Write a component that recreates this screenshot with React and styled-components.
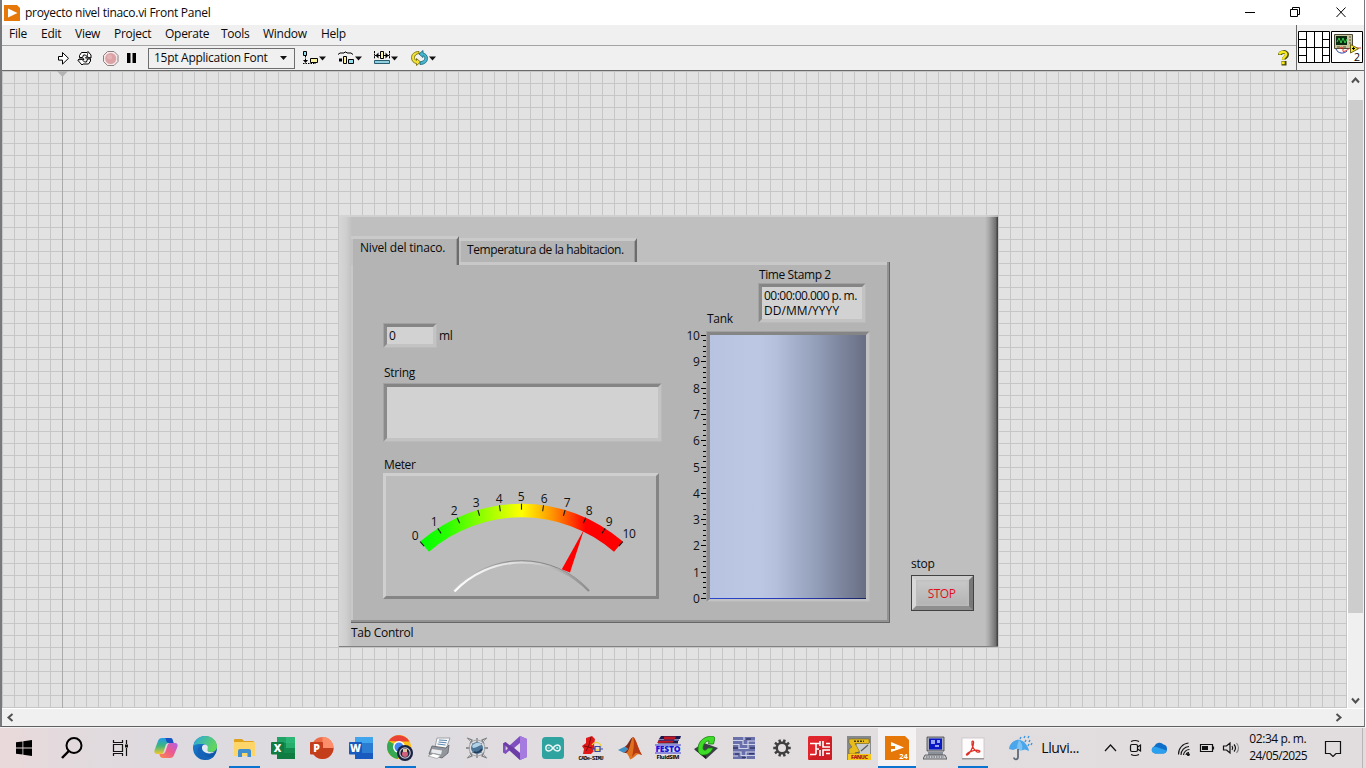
import React from "react";
import styled, { createGlobalStyle } from "styled-components";

const Global = createGlobalStyle`
  * { box-sizing: border-box; }
  html, body { margin: 0; padding: 0; overflow: hidden; }
  body { font-family: "Open Sans", "Noto Sans", sans-serif; font-size: 12px; color: #000; }
  svg { display: block; flex: none; }
`;

const T = styled.span`
  display: block;
  white-space: pre;
  line-height: 16px;
  letter-spacing: ${(p) => p.$ls ?? -0.27}px;
  font-size: ${(p) => p.$size ?? 12}px;
  color: ${(p) => p.$color ?? "#0a0a0a"};
`;

const Screen = styled.div`
  width: 1366px;
  height: 768px;
  display: flex;
  flex-direction: column;
  background: #fff;
`;
const Window = styled.div`
  height: 727px;
  width: 1365px;
  display: flex;
  flex-direction: column;
  border-left: 2px solid #77797d;
  border-right: 1px solid #77797d;
  border-bottom: 1px solid #606060;
`;
const TitleBar = styled.div`
  height: 25px;
  flex: none;
  display: flex;
  align-items: center;
  padding-left: 2px;
  background: #fff;
`;
const TitleText = styled(T)`
  margin-left: 5px;
  padding-top: 1px;
  flex: 1;
`;
const Header = styled.div`
  height: 46px;
  flex: none;
  display: flex;
  background: #f0f0f0;
  border-bottom: 1px solid #6a6a6a;
`;
const Bars = styled.div`
  flex: 1;
  display: flex;
  flex-direction: column;
`;
const MenuBar = styled.div`
  height: 21px;
  display: flex;
  padding-left: 7px;
  padding-top: 1px;
  border-bottom: 1px solid #a3a3a3;
`;
const MenuItem = styled(T)`
  width: ${(p) => p.$w}px;
  flex: none;
`;
const ToolBar = styled.div`
  flex: 1;
  display: flex;
  align-items: center;
`;
const FontBox = styled.div`
  width: 147px;
  height: 21px;
  flex: none;
  margin: 0 7px 0 11px;
  padding: 0 7px 0 5px;
  border: 1px solid #6e6e6e;
  display: flex;
  align-items: center;
  justify-content: space-between;
`;
const Spacer = styled.div`
  flex: ${(p) => (p.$w ? "none" : 1)};
  width: ${(p) => p.$w ?? 0}px;
`;
const PaneIcons = styled.div`
  width: 68px;
  display: flex;
  padding: 6px 0 0 1px;
  border-left: 1px solid #6a6a6a;
`;
const Work = styled.div`
  flex: 1;
  min-height: 0;
  display: flex;
`;
const Canvas = styled.div`
  flex: 1;
  position: relative;
  background-color: #e2e2e2;
  background-image: linear-gradient(90deg, #c6c6c6 1px, transparent 1px),
    linear-gradient(#c6c6c6 1px, transparent 1px);
  background-size: 12px 12px;
`;
const Origin = styled.div`
  position: absolute;
  left: 60px;
  top: 0;
  bottom: 0;
  width: 1px;
  background: #aaa;
`;
const OriginMark = styled.svg`
  position: absolute;
  left: 55px;
  top: 0;
`;
const VScroll = styled.div`
  width: 17px;
  padding: 5px 2px 3px 0;
  background: #f0f0f0;
  border-left: 1px solid #fff;
  display: flex;
  flex-direction: column;
  align-items: center;
`;
const VTrack = styled.div`
  flex: 1;
  width: 15px;
  margin-right: -1px;
  padding-top: 15px;
`;
const Thumb = styled.div`
  height: 513px;
  background: #cdcdcd;
`;
const HScroll = styled.div`
  height: 18px;
  flex: none;
  background: #f0f0f0;
  border-top: 1px solid #fff;
  display: flex;
  align-items: center;
  justify-content: space-between;
  padding: 0 21px 0 4px;
`;

/* front panel */
const Panel = styled.div`
  position: absolute;
  left: 337px;
  top: 144px;
  width: 659px;
  height: 432px;
  padding: 21px 12px 0 12px;
  display: flex;
  background: linear-gradient(90deg, #d6d6d6 0, #cfcfcf 7px, #bfbfbf 13px, #bfbfbf 646px, #a8a8a8 650px, #6e6e6e 657px, #454545 658px);
  border-bottom: 1px solid #808080;
  box-shadow: inset 0 2px 0 rgba(214, 214, 214, 0.75);
`;
const TabControl = styled.div`
  width: 539px;
  flex: none;
`;
const TabStrip = styled.div`
  height: 26px;
  display: flex;
  align-items: flex-end;
`;
const Tab = styled.div`
  position: relative;
  z-index: ${(p) => (p.$active ? 2 : 1)};
  width: ${(p) => p.$w}px;
  height: ${(p) => p.$h}px;
  margin-bottom: ${(p) => (p.$active ? -3 : 0)}px;
  padding: 1px 0 0 ${(p) => (p.$active ? 9 : 8)}px;
  background: #b4b4b4;
  border-top: 3px solid #cacaca;
  border-right: 2px solid #6c6c6c;
  box-shadow: inset -1px 0 0 #999, inset 2px 0 0 #c2c2c2;
`;
const Page = styled.div`
  height: 361px;
  display: flex;
  background: #b4b4b4;
  box-shadow: inset -1px -1px 0 #666, inset -3px -3px 0 #929292, inset 2px 3px 0 #c8c8c8;
`;
const LeftCol = styled.div`
  width: 302px;
  flex: none;
  padding: 61px 0 0 32px;
`;
const RightCol = styled.div`
  padding-top: 5px;
  margin-left: 32px;
`;
const Row = styled.div`
  display: flex;
  align-items: ${(p) => p.$align ?? "center"};
`;
const Sunken = styled.div`
  width: ${(p) => p.$w}px;
  height: ${(p) => p.$h}px;
  border: 4px solid;
  border-color: #858585 #c3c3c3 #c3c3c3 #8a8a8a;
  outline: 1px solid rgba(180, 180, 180, 0.6);
  outline-offset: -1px;
  background: #d2d2d2;
  padding: 1px 0 0 2px;
`;
const TankBody = styled(Sunken)`
  padding: 0;
  border-bottom-width: 3px;
  background: linear-gradient(90deg, #b8c3e1 0, #bcc8e3 50px, #b4c0dc 66px, #949fba 105px, #7a829a 135px, #686f84 156px);
  display: flex;
  align-items: flex-end;
`;
const Fluid = styled.div`
  height: 1px;
  width: 100%;
  background: linear-gradient(90deg, #2a45cf, #2436b0 60%, #1a2466);
`;
const Caption = styled(T)`
  margin: ${(p) => p.$m};
  width: ${(p) => (p.$w ? p.$w + "px" : "auto")};
`;
const StampBlock = styled.div`
  margin-bottom: 4px;
`;
const TankCaption = styled(Caption)`
  width: 51px;
  margin: 0 0 0 22px;
`;
const MeterBox = styled.div`
  width: 276px;
  height: 126px;
  border: 3px solid;
  border-color: #cfcfcf #858585 #858585 #cfcfcf;
  background: #bcbcbc;
`;
const StopCol = styled.div`
  margin: 320px 0 0 21px;
`;
const StopButton = styled.div`
  width: 63px;
  height: 36px;
  margin-top: 3px;
  border: 1px solid #424242;
  display: flex;
`;
const StopFace = styled.div`
  flex: 1;
  border: 4px solid;
  border-color: #cdcdcd #787878 #8e8e8e #d8d8d8;
  box-shadow: inset 0 0 3px 1px #bdbdbd;
  background: linear-gradient(#cacaca, #b2b2b2);
  display: flex;
  align-items: center;
  justify-content: center;
  padding: 2px 2px 0 0;
`;

/* taskbar */
const TaskBar = styled.div`
  height: 41px;
  display: flex;
  align-items: stretch;
  border-top: 1px solid #f4f1f2;
  background: linear-gradient(90deg, #ead9da 0, #e2dadd 70px, #dddae0 200px, #dedbe0 420px, #e2dddf 620px, #e1dcde 100%);
`;
const SysButton = styled.div`
  width: 48px;
  display: flex;
  align-items: center;
  justify-content: center;
`;
const TaskButton = styled.div`
  width: ${(p) => p.$w ?? 38.2}px;
  flex: none;
  display: flex;
  align-items: center;
  justify-content: center;
  position: relative;
  background: ${(p) => (p.$active ? "#f4f2f3" : "transparent")};
  &::after {
    content: "";
    display: ${(p) => (p.$line ? "block" : "none")};
    position: absolute;
    bottom: 0;
    left: ${(p) => (p.$active ? 0 : 4)}px;
    right: ${(p) => (p.$active ? 0 : 4)}px;
    height: 2px;
    background: #0a74d0;
  }
`;
const Weather = styled.div`
  display: flex;
  align-items: center;
  margin-left: 16px;
  width: 96px;
  gap: 7px;
`;
const Tray = styled.div`
  flex: 1;
  display: flex;
  align-items: center;
`;
const Clock = styled.div`
  width: 60px;
  margin-left: 5px;
  padding-bottom: 2px;
`;
const ClockLine = styled(T)`
  line-height: 17px;
`;
const DesktopEdge = styled.div`
  align-self: stretch;
  width: 1px;
  margin: 0 3px 0 20px;
  background: #b9b4b6;
`;

/* icon drawn on a grid whose unit is one screen pixel */
const Px = ({ b, children, ...rest }) => {
  const [, , w, h] = b;
  return (
    <svg width={w} height={h} viewBox={b.join(" ")} {...rest}>
      {children}
    </svg>
  );
};
const Caret = ({ x, y }) => <path d={`M${x} ${y}h7l-3.5 4z`} fill="#111" />;

const Arrow = ({ d }) => (
  <svg width="9" height="9" viewBox="0 0 9 9">
    <path d={d} fill="none" stroke="#505050" strokeWidth="2" />
  </svg>
);

const ToolIcons = {
  run: (
    <Px b={[56, 48, 16, 20]}>
      <path d="M58.500 56.500h4v-4l6 5.800-6 5.800v-4h-4z" fill="#fff" stroke="#000" />
    </Px>
  ),
  loop: (
    <Px b={[76, 48, 18, 20]}>
      <path d="M79.500 57.500v-2l2-3h5.500l1-1 3 3.500v3h-5.500l1.500-1.500-1.500-1.500h-2l-1 2.500z" fill="#fff" stroke="#000" />
      <path d="M90.500 59v2l-2 3h-5.500l-1 1-4-4.500 1-1.500h5l-1 1.500 1.500 1.500h2l1-3z" fill="#fff" stroke="#000" />
      <path d="M88 52l-1 5 4 1M78 60l6-1" stroke="#000" fill="none" strokeWidth=".8" />
    </Px>
  ),
  abort: (
    <Px b={[102, 49, 18, 18]}>
      <path d="M107.500 51.500h6.500l4 4v6l-4 4h-6.500l-4-4v-6z" fill="#f4e8e8" stroke="#8b7f7f" />
      <circle cx="110.700" cy="58.500" r="5.500" fill="#dba3a6" />
      <circle cx="109.500" cy="57" r="2.500" fill="#e4b3b5" />
    </Px>
  ),
  pause: (
    <Px b={[126, 52, 11, 12]}>
      <path d="M127 53h3.500v10H127zM132.500 53h3.500v10h-3.500z" fill="#000" />
    </Px>
  ),
  align: (
    <Px b={[302, 49, 25, 18]}>
      <path d="M303.500 51.500h3v4h-3z" fill="#8fe0ee" stroke="#000" />
      <path d="M305.500 56v4" stroke="#000" strokeDasharray="1.500 1" />
      <path d="M303 60h5l-2.500 3z" fill="#000" />
      <path d="M303 63.500h13" stroke="#000" strokeDasharray="1.500 1" />
      <path d="M310.500 58.500h7v4h-7z" fill="#fbf3a0" stroke="#000" />
      <Caret x={319} y={56.500} />
    </Px>
  ),
  distribute: (
    <Px b={[337, 49, 26, 18]}>
      <path d="M338 54.500l2-1.500h4l1-1h1l1 1h4l2 1.500" fill="none" stroke="#000" />
      <path d="M339 58.500h3v3h-3z" fill="#000" />
      <path d="M343.500 56.500h3v7h-3z" fill="#fbf3a0" stroke="#000" />
      <path d="M348.500 59.500h5v4h-5z" fill="#8fe0ee" stroke="#000" />
      <Caret x={355} y={56.500} />
    </Px>
  ),
  resize: (
    <Px b={[373, 49, 26, 18]}>
      <path d="M374.500 51v8M389.500 51v8" stroke="#000" strokeDasharray="2 .6" />
      <path d="M375 55.500h5M384 55.500h5" stroke="#000" />
      <path d="M375.500 55.500l3-3v6zM388.500 55.500l-3-3v6z" fill="#000" />
      <path d="M380.500 51.500h3v7h-3z" fill="#fbf3a0" stroke="#000" />
      <path d="M374.500 60.500h15v3h-15z" fill="#8fcfe0" stroke="#2b5d70" />
      <Caret x={391} y={56.500} />
    </Px>
  ),
  reorder: (
    <Px b={[410, 49, 27, 18]}>
      <path d="M419 51.500c-5 0-7.500 3-7.500 6 0 3.500 2 5.500 5 6v2l4-3.500-4-3.500v2c-1.500-.5-2-1.500-2-3 0-2 1.500-3.500 4.500-4z" fill="#f2e13a" stroke="#857a12" />
      <path d="M420 64.500c5 0 7.500-3 7.500-6 0-3-2-5-4.500-5.500v-2.500l-4 3.500 4 3.500v-1.800c1.500.3 1.800 1.300 1.800 2.500 0 1.800-1.800 3.300-4.800 3.800z" fill="#46b6cf" stroke="#1f6b80" strokeWidth=".9" />
      <Caret x={429} y={56.500} />
    </Px>
  ),
};

const HelpMark = () => (
  <Px b={[1276, 48, 16, 20]}>
    <path d="M1280 55c0-3.500 7-4 7-.5 0 2.700-3.200 2.500-3.200 5" fill="none" stroke="#4a4708" strokeWidth="4" />
    <path d="M1281.500 61h5v4.500h-5z" fill="#4a4708" />
    <path d="M1279.700 54.500c0-3.200 6.600-3.500 6.600-.3 0 2.700-3.200 2.500-3.200 5.300" fill="none" stroke="#f4ea1c" strokeWidth="2.400" />
    <path d="M1281.700 61.500h3v2.700h-3z" fill="#f4ea1c" />
  </Px>
);

const PaneGrid = () => (
  <Px b={[1298, 31, 33, 33]}>
    <path
      d="M1298.500 31.500h31v31h-31zM1306.500 31.500v31M1314.500 31.500v31M1322.500 31.500v31M1298.500 39.500h8M1298.500 47.500h31M1298.500 55.500h8M1322.500 39.500h7M1322.500 55.500h7"
      fill="#fff"
      stroke="#000"
    />
  </Px>
);
const ViIcon = () => (
  <Px b={[1331, 31, 33, 33]}>
    <path d="M1331.500 31.500h31v31h-31z" fill="#fff" stroke="#000" />
    <path d="M1334.500 34.500h18v14h-18z" fill="#c9c49c" stroke="#4a4838" />
    <path d="M1336 36h11v9h-11z" fill="#0b2a12" />
    <path d="M1337 42l2-4 2 5 2-5 2 5 2-4" fill="none" stroke="#35d04a" />
    <path d="M1349 37h2M1349 40h2M1349 43h2M1337 47h3M1343 47h3" stroke="#55503c" />
    <path d="M1336 49c2 5 8 5 11 2" fill="none" stroke="#2638a0" />
    <path d="M1340 49c0-3 4-2 3 1s3 1 7-2h11" fill="none" stroke="#d8342a" />
    <path d="M1350.500 44.500v8.500l8-4.300z" fill="#f7e83b" stroke="#6d6412" />
    <path d="M1352 48.500h3M1353.500 47v3" stroke="#000" />
    <text x="1354" y="61" fontSize="10.500" fontFamily="Open Sans">2</text>
  </Px>
);

/* meter geometry */
const CX = 521.5, CY = 658.2, RO = 154.5, RI = 141;
const pt = (r, deg) => {
  const a = (deg * Math.PI) / 180;
  return [CX + r * Math.sin(a), CY - r * Math.cos(a)].map((v) => v.toFixed(2));
};
const METER_LABELS = [[415, 535], [434, 521], [454, 510], [476, 502], [499, 498], [521, 496], [544, 498], [567, 502], [589, 510], [609, 521], [629, 533]];
const Meter = () => (
  <Px b={[386, 476, 270, 120]}>
    <defs>
      <linearGradient id="mg" gradientUnits="userSpaceOnUse" x1="421" y1="0" x2="622" y2="0">
        <stop offset="0" stopColor="#00ff00" />
        <stop offset=".12" stopColor="#24ff00" />
        <stop offset=".5" stopColor="#ffff00" />
        <stop offset=".66" stopColor="#ff9000" />
        <stop offset=".82" stopColor="#ff0000" />
      </linearGradient>
      <linearGradient id="rim" gradientUnits="userSpaceOnUse" x1="454" y1="0" x2="589" y2="0">
        <stop offset="0" stopColor="#fff" />
        <stop offset=".4" stopColor="#e4e4e4" />
        <stop offset=".6" stopColor="#cfcfcf" />
        <stop offset="1" stopColor="#8a8a8a" />
      </linearGradient>
      <linearGradient id="rim2" gradientUnits="userSpaceOnUse" x1="454" y1="0" x2="589" y2="0">
        <stop offset="0" stopColor="#d0d0d0" />
        <stop offset=".4" stopColor="#8c8c8c" />
        <stop offset=".75" stopColor="#858585" />
        <stop offset="1" stopColor="#9a9a9a" />
      </linearGradient>
    </defs>
    <path
      d={`M${pt(RO, -41)}A${RO} ${RO} 0 0 1 ${pt(RO, 41)}L${pt(RI, 41)}A${RI} ${RI} 0 0 0 ${pt(RI, -41)}Z`}
      fill="url(#mg)"
    />
    {METER_LABELS.map(([x, y], i) => {
      const a = -41 + i * 8.2;
      return (
        <g key={i}>
          <path d={`M${pt(RO, a)}L${pt(RO - 6, a)}`} stroke="#1a1a1a" strokeWidth="1.100" />
          <text x={x} y={y + 4.500} fontSize="12" textAnchor="middle" letterSpacing="-.3" fill="#111">{i}</text>
        </g>
      );
    })}
    <path d="M454.500 591.500A93 93 0 0 1 589 591" fill="none" stroke="url(#rim)" strokeWidth="2.200" />
    <path d="M453.500 590.200A93 93 0 0 1 589.500 590.200" fill="none" stroke="url(#rim2)" strokeWidth="1" />
    <path d="M584 529.500L570 572.500L561.800 569.200Z" fill="#f00" />
  </Px>
);

const TankScale = () => (
  <svg width="21" height="271" viewBox="685 331 21 271" overflow="visible">
    {Array.from({ length: 51 }, (_, i) => {
      const y = Math.round(335 + i * 5.26) + 0.5;
      const major = i % 5 === 0;
      return (
        <g key={i}>
          <path d={`M${major ? 701 : 703} ${y}H706`} stroke="#000" />
          {major && (
            <text x="699.500" y={y + 4} fontSize="12" textAnchor="end" letterSpacing="-.3" fill="#111">{10 - i / 5}</text>
          )}
        </g>
      );
    })}
  </svg>
);

/* taskbar icons, 24 x 24 */
const I = ({ children, s = 24 }) => (
  <svg width={s} height={s} viewBox="0 0 24 24">{children}</svg>
);
const Office = ({ l, c, m, d, round }) => (
  <I>
    {round ? (
      <>
        <circle cx="12.500" cy="12" r="11" fill={m} />
        <path d="M12.500 1a11 11 0 0 1 11 11h-11z" fill={c} />
        <path d="M1.500 12h22a11 11 0 0 1-22 0z" fill={d} />
      </>
    ) : (
      <>
        <rect x="6" y="1" width="18" height="22" rx="1" fill={m} />
        <rect x="6" y="1" width="18" height="6" fill={c} />
        <rect x="6" y="17" width="18" height="6" fill={d} />
        {l === "X" && <path d="M15 1h9v11h-9z" fill="#33c481" opacity=".6" />}
      </>
    )}
    <rect x="0" y="6" width="13" height="12.500" rx="1" fill={d} />
    <text x="6.500" y="16" textAnchor="middle" fontSize="10.500" fontWeight="800" fill="#fff">{l}</text>
  </I>
);

const Icons = {
  copilot: (
    <I>
      <defs>
        <linearGradient id="cpa" x1="0" y1="0" x2="0" y2="1"><stop offset="0" stopColor="#1f9be8" /><stop offset=".5" stopColor="#3fb67c" /><stop offset="1" stopColor="#f3c72f" /></linearGradient>
        <linearGradient id="cpb" x1="1" y1="0" x2="0" y2="1"><stop offset="0" stopColor="#b160e8" /><stop offset=".5" stopColor="#ef5a8c" /><stop offset="1" stopColor="#f98a4a" /></linearGradient>
      </defs>
      <path d="M8 2h8c2 0 2.500 1 3 3l.6 2H15c-2 0-3 1-3.600 3l-1.800 6c-.6 1.500-1.500 2-3 2H3c-2.500 0-3-2-2.400-4L4 5c.6-2 2-3 4-3z" fill="url(#cpa)" />
      <path d="M11 2h5c2 0 2.500 1 3 3l.6 2H15c-2 0-2.500-1-3-3-.2-1-.4-2-1-2z" fill="#1b4fc4" />
      <path d="M16 22H9c-2 0-2.800-1-3.200-2.500L5.400 18H8c2 0 3-1 3.600-3l2-6c.6-1.500 1.500-2 3-2H21c2.500 0 3 2 2.400 4L20 19c-.6 2-2 3-4 3z" fill="url(#cpb)" />
    </I>
  ),
  edge: (
    <I>
      <defs>
        <linearGradient id="ea" x1="0" y1="0" x2="1" y2=".4"><stop offset="0" stopColor="#2aa7e0" /><stop offset="1" stopColor="#62d65c" /></linearGradient>
        <linearGradient id="eb" x1="0" y1="0" x2="1" y2="1"><stop offset="0" stopColor="#1c87d8" /><stop offset="1" stopColor="#0c4a9c" /></linearGradient>
      </defs>
      <circle cx="12" cy="12" r="12" fill="url(#eb)" />
      <path d="M.5 10C1.500 4 6.500 0 12 0c7 0 12 5 12 10.500 0 4-3 5.500-6 5.500-3 0-4-1.500-3.500-2.500 1.500-3-1-5.500-4-5.500C6 8 2 8 .5 10z" fill="url(#ea)" />
      <path d="M9.500 11.500c-1.500 4 1 8.500 6 9.500 2 .3 4-.3 6-1.500-1 2-3.500 3.500-6 4C9 24 4 20 4.500 15c.2-3 2.500-6 5.500-6z" fill="#1563b8" />
      <path d="M14.700 13c1-3-1-4.500-3-4.500-3 0-3.500 4-1.500 6.500 2.500 2.800 8 3.500 12 .5-2 1-5 .8-6.500.3-1-.5-1.400-1.400-1-2.800z" fill="#e4e8f2" />
    </I>
  ),
  folder: (
    <I>
      <path d="M2 4q0-1 1-1h7l2 2h9q1 0 1 1v14H2z" fill="#e0a21a" />
      <path d="M2 6h20q1 0 1 1v13H2z" fill="#fdd568" />
      <path d="M6 20v-5q0-2 2-2h9q2 0 2 2v6h-3.500v-4h-5.500v4H6z" fill="#3f8ed0" />
    </I>
  ),
  excel: <Office l="X" c="#21a366" m="#158a4f" d="#107c41" />,
  ppt: <Office l="P" c="#ff8f6b" m="#ed6c47" d="#c43e1c" round />,
  word: <Office l="W" c="#41a5ee" m="#2b7cd3" d="#185abd" />,
  chrome: (
    <svg width="26" height="26" viewBox="0 0 26 26">
      <circle cx="12" cy="12" r="12" fill="#fbc116" />
      <path d="M12 12L1.600 6a12 12 0 0 0 9 17.900l4-8z" fill="#34a853" />
      <path d="M1.600 6A12 12 0 0 1 22.400 6.500H12z" fill="#ea4335" />
      <circle cx="12" cy="12" r="6" fill="#fff" />
      <circle cx="12" cy="12" r="4.500" fill="#4285f4" />
      <circle cx="18" cy="18" r="8" fill="#18213f" />
      <circle cx="18" cy="18" r="5.200" fill="none" stroke="#c9c3cf" strokeWidth="1.200" />
      <circle cx="18" cy="19" r="3" fill="#d0607c" />
      <path d="M16 14h4v3h-4z" fill="#e6c9a0" />
    </svg>
  ),
  printer: (
    <I>
      <path d="M10 2l13 0-4 11-11-2z" fill="#fafafa" stroke="#8a8f94" strokeWidth=".8" />
      <path d="M12 4l8 .5M11.500 6l8 .8M10.500 8l8 1" stroke="#5c88b0" />
      <path d="M5 10l14 2 3-3-1 8-6 5-13-4z" fill="#92969c" stroke="#5b6066" strokeWidth=".8" />
      <path d="M5 13l10 1.500-1 4-10-2z" fill="#e9ebee" />
      <path d="M1 20l9 2.500 4-3-8-2z" fill="#fff" stroke="#888" strokeWidth=".6" />
    </I>
  ),
  atom: (
    <I>
      <path d="M2 2l5 2-2 4M22 2l-5 2 2 4M2 22l5-2-2-4M22 22l-5-2 2-4M12 2v4M12 18v4M1 12h4M19 12h4" stroke="#77797c" strokeWidth="1.300" fill="none" />
      <path d="M2 2l20 20M22 2L2 22" stroke="#9a9da0" strokeWidth="1" />
      <circle cx="12" cy="12" r="8" fill="none" stroke="#a4a7aa" />
      <circle cx="12" cy="12" r="6" fill="#4a7598" />
      <path d="M7 10c3-4 8-4 10-1-3 0-5 3-9 3z" fill="#b4d2e6" />
      <path d="M9 16c3 1 6 0 8-3" stroke="#223c54" strokeWidth="1.500" fill="none" />
    </I>
  ),
  vs: (
    <I>
      <path d="M17 0l7 3v18l-7 3L6.500 14.500 2.500 18 0 16.500v-9L2.500 6l4 3.500z" fill="#7f4fc0" />
      <path d="M17 0l7 3v18l-7 3z" fill="#a67be0" />
      <path d="M17 7v10l-6-5zM2.700 9.500v5L5.200 12z" fill="#e3dde6" />
      <path d="M0 7.500L2.500 6 11 12l6 5v7L6.500 14.500z" fill="#5c2d91" opacity=".55" />
    </I>
  ),
  arduino: (
    <I>
      <rect x="1" y="1" width="22" height="22" rx="3.500" fill="#2fa3a0" />
      <path d="M12 12c-1.500-2-2.500-3-4.200-3a3 3 0 0 0 0 6c1.700 0 2.700-1 4.200-3s2.500-3 4.200-3a3 3 0 0 1 0 6c-1.700 0-2.700-1-4.200-3z" fill="none" stroke="#e9f6f5" strokeWidth="1.400" />
      <path d="M6.700 12h2M15.200 12h2M16.200 11v2" stroke="#e9f6f5" strokeWidth=".8" />
    </I>
  ),
  cade: (
    <svg width="26" height="25" viewBox="-1 0 26 25">
      <path d="M7 2l6-2 3 3-1 6 1 5-4 4-8 0 1-5-2-3 4-3z" fill="#e01818" />
      <path d="M12 1l-2 8-3 6M5 10l8 2" stroke="#7a0c0c" fill="none" />
      <path d="M13 9c3-5 10-2 9 3M14 14h8" fill="none" stroke="#ecd23a" strokeWidth="1.300" />
      <path d="M16 10.500h5v5h-5zM13 13h3M21 13h3" fill="none" stroke="#3946a8" strokeWidth="1.200" />
      <text x="12" y="23.500" textAnchor="middle" fontSize="5.500" fontWeight="700" textLength="25" fontFamily="Liberation Mono">CADe-SIMU</text>
    </svg>
  ),
  matlab: (
    <I>
      <path d="M0 14l7-3.500 3 2.500-4 4z" fill="#3f8fc4" />
      <path d="M7 10.500C10 9.500 12 2 15 1c-2 7-3.500 14-6 16l-3 0 4-4z" fill="#7d2a1c" />
      <path d="M15 1c3 1 5 12 9 18-3-1.500-5-1-6.500 1-2 2-4 3-5.500 3.500C11 20 9.500 17.500 8 17c4-2 4-12 7-16z" fill="#e0701e" />
      <path d="M15 1c1.500 3 1 12-1 20 2-2 3-4 4-4 2-.5 4 1 6 2-4-6-6-17-9-18z" fill="#b63a14" />
    </I>
  ),
  festo: (
    <svg width="28" height="26" viewBox="-1 0 28 26">
      <path d="M6 1h20l-1 3H4zM3 6h20v2.500H3z" fill="#1a1a50" />
      <path d="M9 1.500h12l-3 6-16 .5 2-3h5z" fill="#c01822" />
      <path d="M4 4.500h20v1.300H3z" fill="#24307a" />
      <text x="13" y="17" textAnchor="middle" fontSize="8.500" fontWeight="800" fill="#1414d8" textLength="25">FESTO</text>
      <path d="M0 10h26M0 18h26" stroke="#1414d8" strokeWidth=".8" />
      <text x="13" y="23.500" textAnchor="middle" fontSize="6" fontWeight="700" textLength="23">FluidSIM</text>
    </svg>
  ),
  camtasia: (
    <I>
      <path d="M0 13l10-6 14 5-12 11z" fill="#3c4046" />
      <path d="M0 13l12 7v3z" fill="#1e2024" />
      <path d="M4 13C4 6 9 .5 18 0c2 0 3 1 2.500 4l-1 4h-5l.5-3c-4 0-6 4-6 7s3 3 5 0h5c-2 5-6 7-9.500 7C6 19 4 17 4 13z" fill="#3ddc26" stroke="#1a7d10" strokeWidth=".8" />
    </I>
  ),
  circuit: (
    <I>
      <rect x="1" y="1" width="22" height="22" fill="#6a70aa" />
      <path d="M1 4.500h10v4h12M1 8.500h6v4h9V5h7M1 16h8v3.500h14M1 20h5M12 1v3M14 23v-7h9" fill="none" stroke="#d0d2ea" strokeWidth="1.200" />
      <path d="M1 12h5M18 12h5M10 21.500h4M14 3h5M3 18h4M17 17.800h5" stroke="#34386c" strokeWidth="1.500" />
    </I>
  ),
  gear: (
    <I s={20}>
      <circle cx="12" cy="12" r="6.300" fill="none" stroke="#3f3f3f" strokeWidth="3" />
      {Array.from({ length: 10 }, (_, i) => (
        <rect key={i} x="10.500" y="1.500" width="3" height="4" fill="#3f3f3f" transform={`rotate(${i * 36 + 18} 12 12)`} />
      ))}
    </I>
  ),
  redTool: (
    <I>
      <rect x="0" y="0" width="24" height="24" rx="1.500" fill="#e0252c" />
      <path d="M24 0v24H0z" fill="#b9141c" opacity=".45" />
      <path d="M2 7.500h10M8 7.500v11M2 18.500h6M8 13h3M12 5v5M12 14v6M15 5v6h7M15 20v-6h7M18 7.500h4M18 17.500h4" fill="none" stroke="#fff" strokeWidth="1.600" />
    </I>
  ),
  fanuc: (
    <I>
      <rect x="0" y="0" width="24" height="24" fill="#85898b" />
      <path d="M10 8l13-1v11H6z" fill="#c9ccce" />
      <path d="M2 3h20v4.500H8l4 7v3.500H2v-5l3-2-3-4z" fill="#e8bc1c" stroke="#7a6618" strokeWidth=".6" />
      <path d="M7 5.300h10" stroke="#443c10" strokeWidth="1.500" strokeDasharray="2 1" />
      <path d="M14 15l7-6M8 17l5-1" stroke="#5a5d60" strokeWidth="1.200" />
      <rect x="1" y="18" width="23" height="6" fill="#f7c81c" />
      <text x="12.500" y="23.200" textAnchor="middle" fontSize="5.500" fontWeight="800" fill="#b32018" textLength="17">FANUC</text>
    </I>
  ),
  labview: (
    <I>
      <path d="M0 0h20l4 4v20H0z" fill="#e6780a" />
      <path d="M6 6l13 5.500L6 16v-3h4v-3H6z" fill="#fff" />
      <text x="18.500" y="22.800" textAnchor="middle" fontSize="7.500" fontWeight="700" fill="#fff">24</text>
    </I>
  ),
  pc: (
    <I>
      <path d="M4 1h17v14H4z" fill="#a8acb8" stroke="#444" strokeWidth=".8" />
      <path d="M6 2.500h13v11H6z" fill="#0a18c8" />
      <path d="M8 4h4v4H8zM14 4h3v3h-3zM12 9h4v2h-4z" fill="#9aa8f4" />
      <path d="M5 16h15v3H5z" fill="#8c9098" />
      <path d="M2 19h20l2 4H0z" fill="#c9ccd2" stroke="#444" strokeWidth=".8" />
      <path d="M3 21h18" stroke="#555" strokeDasharray="1.500 1" />
    </I>
  ),
  acrobat: (
    <I>
      <rect x="1" y="2" width="22" height="20.500" fill="#fdfbfb" stroke="#c9c4c6" strokeWidth=".8" />
      <path d="M1 22h22v1.500H1z" fill="#9a9698" />
      <path d="M5.500 18.500c1-2.500 9-5.500 13-3.700 1 .8-.3 2-2.500 1C12.500 14 10.500 9.500 11 6c.2-1.200 1.600-1.200 1.600.5C12.600 11 8.500 18 6.500 19c-.8.300-1.200 0-1-.5z" fill="none" stroke="#e03128" strokeWidth="1.300" />
    </I>
  ),
};

const TASKS = [
  ["copilot", 39], ["edge", 39], ["folder", 39, 1], ["excel", 39], ["ppt", 39], ["word", 39], ["chrome", 39, 1],
  ["printer"], ["atom"], ["vs"], ["arduino"], ["cade"], ["matlab"], ["festo"], ["camtasia"], ["circuit"], ["gear"],
  ["redTool"], ["fanuc"], ["labview", 38.2, 1, 1], ["pc"], ["acrobat", 38.2, 1],
];
const MENU = [["File", 32], ["Edit", 34], ["View", 39], ["Project", 51], ["Operate", 56], ["Tools", 42], ["Window", 58], ["Help", 40]];

export default function App() {
  return (
    <Screen>
      <Global />
      <Window>
        <TitleBar>
          <Px b={[4, 4, 16, 16]}>
            <path d="M4 4h13l3 3v13H4z" fill="#e6780a" />
            <path d="M8 7.500l9.500 4.500L8 16.500z" fill="#fff" />
          </Px>
          <TitleText $ls={-0.28}>proyecto nivel tinaco.vi Front Panel</TitleText>
          <Px b={[1244, 4, 112, 16]}>
            <path d="M1245 11.500h10M1290.500 8.500h7v7h-7zM1292.500 8.500v-2h7v7h-2M1336.500 6.500l9 9.500M1345.500 6.500l-9 9.500" fill="none" stroke="#000" />
          </Px>
          <Spacer $w={8} />
        </TitleBar>
        <Header>
          <Bars>
            <MenuBar>
              {MENU.map(([m, w]) => <MenuItem key={m} $w={w}>{m}</MenuItem>)}
            </MenuBar>
            <ToolBar>
              <Spacer $w={54} />
              {ToolIcons.run}
              <Spacer $w={4} />
              {ToolIcons.loop}
              <Spacer $w={8} />
              {ToolIcons.abort}
              <Spacer $w={6} />
              {ToolIcons.pause}
              <FontBox>
                <T>15pt Application Font</T>
                <svg width="7" height="4" viewBox="0 0 7 4"><path d="M0 0h7L3.500 4z" fill="#111" /></svg>
              </FontBox>
              {ToolIcons.align}
              <Spacer $w={10} />
              {ToolIcons.distribute}
              <Spacer $w={10} />
              {ToolIcons.resize}
              <Spacer $w={11} />
              {ToolIcons.reorder}
              <Spacer />
              <HelpMark />
              <Spacer $w={4} />
            </ToolBar>
          </Bars>
          <PaneIcons>
            <PaneGrid />
            <ViIcon />
          </PaneIcons>
        </Header>
        <Work>
          <Canvas>
            <Origin />
            <OriginMark width="11" height="6" viewBox="0 0 11 6"><path d="M0 0h11L5.500 6z" fill="#b4b4b4" /></OriginMark>
            <Panel>
              <TabControl>
                <TabStrip>
                  <Tab $active $w={108} $h={29}><T $ls={-0.2}>Nivel del tinaco.</T></Tab>
                  <Tab $w={178} $h={24}><T $ls={-0.4}>Temperatura de la habitacion.</T></Tab>
                </TabStrip>
                <Page>
                  <LeftCol>
                    <Row>
                      <Sunken $w={54} $h={25}><T>0</T></Sunken>
                      <Caption $m="1px 0 0 2px">ml</Caption>
                    </Row>
                    <Caption $m="17px 0 2px 1px">String</Caption>
                    <Sunken $w={279} $h={59} />
                    <Caption $m="15px 0 0 1px" $ls={-0.4}>Meter</Caption>
                    <MeterBox><Meter /></MeterBox>
                  </LeftCol>
                  <RightCol>
                    <Row $align="flex-end">
                      <TankCaption>Tank</TankCaption>
                      <StampBlock>
                        <Caption $m="0 0 0 1px" $ls={-0.4}>Time Stamp 2</Caption>
                        <Sunken $w={108} $h={40}>
                          <T $ls={-0.52}>00:00:00.000 p. m.</T>
                          <T $ls={0.05} style={{ marginTop: -1 }}>DD/MM/YYYY</T>
                        </Sunken>
                      </StampBlock>
                    </Row>
                    <Spacer style={{ height: 4 }} />
                    <Row>
                      <TankScale />
                      <TankBody $w={164} $h={271}><Fluid /></TankBody>
                    </Row>
                  </RightCol>
                </Page>
                <Caption $m="2px 0 0 0">Tab Control</Caption>
              </TabControl>
              <StopCol>
                <T>stop</T>
                <StopButton><StopFace><T $color="#e0101c" $ls={-0.5}>STOP</T></StopFace></StopButton>
              </StopCol>
            </Panel>
          </Canvas>
          <VScroll>
            <Arrow d="M1 6.500l3.500-4 3.500 4" />
            <VTrack><Thumb /></VTrack>
            <Arrow d="M1 2.500l3.500 4 3.500-4" />
          </VScroll>
        </Work>
        <HScroll>
          <Arrow d="M6.500 1l-4 3.500 4 3.500" />
          <Arrow d="M2.500 1l4 3.500-4 3.500" />
        </HScroll>
      </Window>
      <TaskBar>
        <SysButton>
          <Px b={[0, 0, 16, 16]}>
            <path d="M0 2.300L6.500 1.400v6.200H0zM7.300 1.300L16 0v7.600H7.300zM0 8.400h6.500v6.200L0 13.700zM7.300 8.400H16V16l-8.700-1.300z" fill="#000" />
          </Px>
        </SysButton>
        <SysButton>
          <Px b={[0, 0, 22, 22]}>
            <circle cx="13" cy="8.500" r="7.500" fill="none" stroke="#000" strokeWidth="2" />
            <path d="M7.800 14L1 21" stroke="#000" strokeWidth="2.500" />
          </Px>
        </SysButton>
        <SysButton>
          <Px b={[0, 0, 17, 16]}>
            <path d="M1.500 0v2.500h9V0M1.500 4.500h9v7h-9zM1.500 16v-2.500h9V16M14.500 0v4M14.500 8v8" fill="none" stroke="#111" strokeWidth="1.200" />
            <path d="M13 4.500h3v3h-3z" fill="#111" />
          </Px>
        </SysButton>
        <Spacer $w={2.5} />
        {TASKS.map(([n, w, line, active]) => (
          <TaskButton key={n} $w={w} $line={line} $active={active}>{Icons[n]}</TaskButton>
        ))}
        <Weather>
          <Px b={[0, 0, 26, 26]}>
            <path d="M1 14C2 7 8 4 12 5s8 5 9 11l-4-1.500-4 1-4-2-4 1.500z" fill="#4aa6ea" />
            <path d="M9 14c0-4 1-7 2-9 3 3 4 6 3 10l-2 .5z" fill="#7cc2f4" />
            <path d="M10 14v8c0 3-4 3-4 .5" fill="none" stroke="#5d6a78" strokeWidth="1.800" />
            <path d="M13 2l-1 2M17 1l-1 2M21 1l-1 2M18 5l-1 2M22 5l-1 2M21 9l-1 2M24 8l-1 2" stroke="#3c94dc" strokeWidth="1.400" />
          </Px>
          <T $size={14} $ls={-0.4}>Lluvi...</T>
        </Weather>
        <Tray>
          <Px b={[1104, 738, 140, 20]}>
            <g fill="none" stroke="#111" strokeWidth="1.200">
              <path d="M1105 751l5.500-6 5.500 6" />
              <rect x="1130.500" y="744.500" width="7" height="7" rx="1.500" />
              <path d="M1137.500 747l3-2v6l-3-2M1131 741.500q4-2 8 0M1131 754.500q4 2 8 0" />
              <path d="M1178.500 754.500a11 11 0 0 1 10-11.500M1181 755a8.500 8.500 0 0 1 8-8.500M1183.500 755a6 6 0 0 1 6-5.500M1186 755a3 3 0 0 1 3-2.500" strokeWidth="1.100" />
              <path d="M1200.500 744.500h12v7h-12zM1213.500 746.500v3" />
              <path d="M1223.500 746h3l3.500-3v10l-3.500-3h-3zM1232 746q1.500 2 0 4M1234 744.500q3 3.500 0 7" />
              <path d="M1236.500 743q4 5 0 10" stroke="#888" />
            </g>
            <path d="M1202 746h6v4h-6z" fill="#111" />
            <circle cx="1188.300" cy="754.500" r="1.500" fill="#111" />
            <path d="M1155 753.500a4 4 0 0 1-.5-7.500 5.500 5.500 0 0 1 9-1.500 4.500 4.500 0 0 1 3.500 4.500q0 4-3.500 4.500z" fill="#0f6fc8" />
            <path d="M1151.500 750q1-4 5-3l10 3.500q-1 3-3 3h-8.500q-3-.5-3.500-3.500z" fill="#2aa0ee" />
          </Px>
          <Clock>
            <ClockLine $ls={-0.42}>02:34 p. m.</ClockLine>
            <ClockLine $ls={-0.6}>24/05/2025</ClockLine>
          </Clock>
          <Spacer />
          <Px b={[1324, 739, 18, 18]}>
            <path d="M1325.500 741.500h15v12h-4.500l-3 3-3-3h-4.500z" fill="none" stroke="#111" strokeWidth="1.200" />
          </Px>
          <DesktopEdge />
        </Tray>
      </TaskBar>
    </Screen>
  );
}
